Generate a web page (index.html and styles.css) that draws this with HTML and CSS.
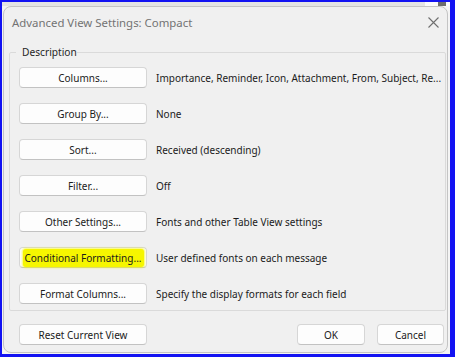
FILE: index.html
```html
<!DOCTYPE html>
<html lang="en">
<head>
    <meta charset="UTF-8">
    <title>Advanced View Settings: Compact</title>
    <link rel="stylesheet" href="styles.css">
</head>
<body>
    <div class="screen">
        <div class="backdrop"><span class="thumb"></span></div>

        <div class="dialog">
            <div class="titlebar">
                <span class="title">Advanced View Settings: Compact</span>
                <svg class="close" width="11" height="11" viewBox="0 0 11 11">
                    <path d="M0.5 0.5 L10.5 10.5 M10.5 0.5 L0.5 10.5" stroke="#6f6f6f" stroke-width="1.1" fill="none"/>
                </svg>
            </div>

            <fieldset class="group">
                <legend>Description</legend>

                <div class="row">
                    <button class="btn wide">Columns...</button>
                    <span class="desc">Importance, Reminder, Icon, Attachment, From, Subject, Re...</span>
                </div>
                <div class="row">
                    <button class="btn wide">Group By...</button>
                    <span class="desc">None</span>
                </div>
                <div class="row">
                    <button class="btn wide">Sort...</button>
                    <span class="desc">Received (descending)</span>
                </div>
                <div class="row">
                    <button class="btn wide">Filter...</button>
                    <span class="desc">Off</span>
                </div>
                <div class="row">
                    <button class="btn wide">Other Settings...</button>
                    <span class="desc">Fonts and other Table View settings</span>
                </div>
                <div class="row">
                    <button class="btn wide"><span class="marker">Conditional Formatting...</span></button>
                    <span class="desc">User defined fonts on each message</span>
                </div>
                <div class="row">
                    <button class="btn wide">Format Columns...</button>
                    <span class="desc">Specify the display formats for each field</span>
                </div>
            </fieldset>

            <div class="footer">
                <button class="btn wide">Reset Current View</button>
                <div class="actions">
                    <button class="btn ok">OK</button>
                    <button class="btn cancel">Cancel</button>
                </div>
            </div>
        </div>
    </div>
</body>
</html>
```

FILE: styles.css
```css
html, body {
    margin: 0;
    padding: 0;
}
body {
    font-family: "Noto Sans", "Open Sans", sans-serif;
    font-size: 10px;
    color: #1b1b1b;
}
.screen {
    width: 455px;
    height: 357px;
    box-sizing: border-box;
    border-style: solid;
    border-color: #1212f2;
    border-width: 2px 5px 3px 2px;
    background: #f4f4f4;
    display: flex;
    flex-direction: column;
}
.backdrop {
    height: 4px;
    display: flex;
    justify-content: flex-end;
    background: linear-gradient(to right, #e4e4e4 0, #e4e4e4 423px, #fafafa 423px);
}
.thumb {
    width: 8px;
    background: #6c6c6c;
    margin-right: 4px;
}
.dialog {
    margin: 0 0 1px 1px;
    width: 445px;
    flex: 1;
    box-sizing: border-box;
    background: #f0f0f0;
    border: 1px solid #c4c4c4;
    border-radius: 8px;
    display: flex;
    flex-direction: column;
}
.titlebar {
    height: 30px;
    display: flex;
    align-items: center;
    justify-content: space-between;
    padding: 0 8px 0 8px;
}
.title {
    font-size: 11.4px;
    color: #737373;
    margin-top: 1px;
}
.close {
    margin-top: 1px;
}
.group {
    margin: 8px 1px 0 5px;
    padding: 8px 0 6px 9px;
    border: 1px solid #dadada;
    border-radius: 2px;
    display: flex;
    flex-direction: column;
    gap: 15px;
}
.group legend {
    padding: 0 0 0 6px;
    margin-left: -3px;
    color: #262626;
    font-size: 10.2px;
}
.row {
    display: flex;
    align-items: center;
    gap: 9px;
}
.btn {
    height: 21px;
    box-sizing: border-box;
    padding: 0;
    font-family: inherit;
    font-size: 10px;
    color: #1b1b1b;
    white-space: nowrap;
    background: #fdfdfd;
    border: 1px solid #d6d6d6;
    border-bottom-color: #c2c2c2;
    border-radius: 4px;
    display: flex;
    align-items: center;
    justify-content: center;
}
.wide {
    width: 128px;
    flex-shrink: 0;
}
.marker {
    background: #f6f600;
    padding: 2px 2px;
    border-radius: 3px;
    box-shadow: 0 0 2px 1px rgba(246, 246, 0, 0.6);
}
.desc {
    white-space: nowrap;
}
.footer {
    display: flex;
    justify-content: space-between;
    align-items: center;
    margin: 13px 3px 0 15px;
}
.actions {
    display: flex;
    gap: 12px;
}
.ok {
    width: 68px;
}
.cancel {
    width: 67px;
}
```
